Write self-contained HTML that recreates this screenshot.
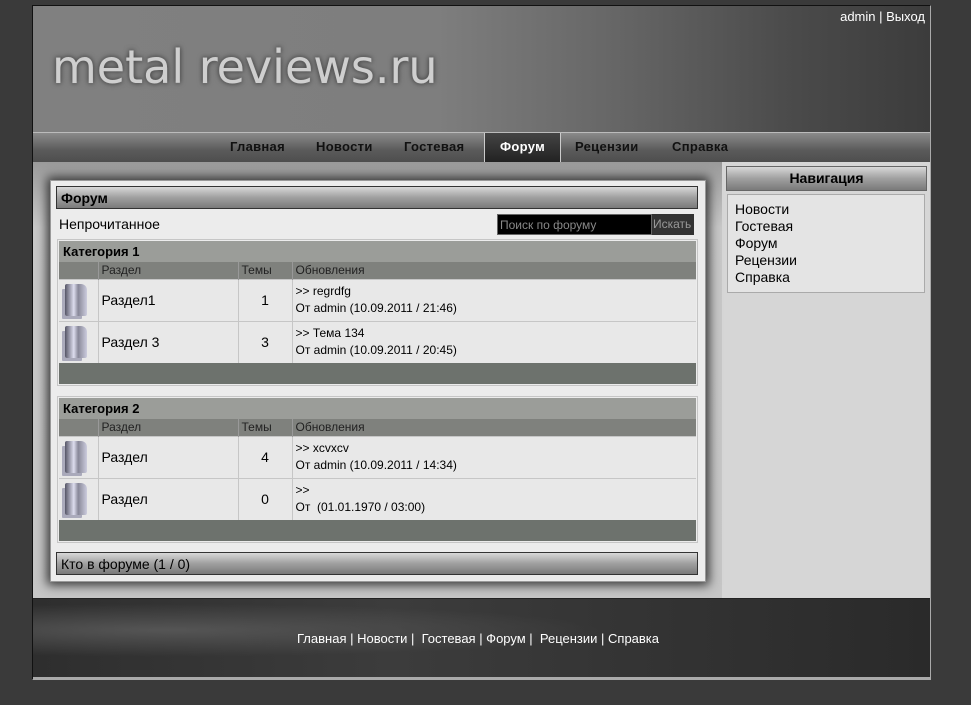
<!DOCTYPE html>
<html><head><meta charset="utf-8"><style>
*{margin:0;padding:0;box-sizing:border-box}
body{width:971px;height:705px;background:#3a3a3a;font-family:"Liberation Sans",sans-serif;position:relative;overflow:hidden}
.a{position:absolute}
#wrap{left:32px;top:5px;width:899px;height:675px;border:1px solid #111;border-right-color:#aaa;border-bottom-color:#aaa;background:#d4d4d4}
#hdr{left:33px;top:6px;width:897px;height:126px;background:linear-gradient(90deg,#808080 0%,#7e7e7e 45%,#666 65%,#4a4a4a 85%,#3c3c3c 100%)}
#logo{left:52px;top:40px;font-family:"DejaVu Sans",sans-serif;font-size:46px;color:#cfcfcf;letter-spacing:0;text-shadow:0 0 6px #444,0 0 3px #555,0 0 1px #ccc}
#user{right:46px;top:9px;color:#fff;font-size:13px}
#nav{left:33px;top:132px;width:897px;height:30px;border-top:1px solid #bbb;background:linear-gradient(#8a8a8a,#5a5a5a 60%,#4e4e4e)}
.ni{top:7px;font-size:13px;font-weight:bold;color:#111;letter-spacing:0.3px}
#act{left:484px;top:133px;width:77px;height:29px;background:linear-gradient(#444,#222);border-left:1px solid #ccc;border-right:1px solid #ccc;color:#fff;font-weight:bold;font-size:13px;text-align:center;padding-top:6px;letter-spacing:0.3px}
#main{left:33px;top:162px;width:689px;height:436px;background:linear-gradient(#9a9a9a,#c8c8c8 15%,#c6c6c6)}
#side{left:722px;top:162px;width:208px;height:436px;background:#d6d6d6}
#box{left:50px;top:180px;width:656px;height:402px;background:#ececec;border:1px solid #999;box-shadow:0 0 10px 3px #333}
.bar{height:23px;border:1px solid #333;background:linear-gradient(#d8d8d8,#a0a0a0 50%,#7a7a7a);font-size:14px;color:#000;padding:3px 4px}
table{border-collapse:collapse;font-size:14px}
.cat{left:57px;width:641px;border:1px solid #c6c6c6;background:#ececec;padding:1px}
.ct{height:21px;background:#9b9d99;font-weight:bold;font-size:13px;padding:2px 4px;border-bottom:0}
.th td{background:#7f817d;height:17px;font-size:12px;color:#222;padding:0 3px;border-left:1px solid #999}
.tr td{height:42px;border-top:1px solid #c6c6c6;border-left:1px solid #c6c6c6;background:#e8e8e8}
.ft{height:21px;background:#6d726d}
.fold{width:22px;height:32px;margin-left:6px;background:linear-gradient(90deg,#556,#dde 40%,#889 60%,#ccd);border-radius:2px 6px 2px 2px;box-shadow:-4px 4px 0 -1px #aab}
.up{font-size:12px;line-height:17px}
#foot{left:33px;top:598px;width:897px;height:81px;background:radial-gradient(ellipse at 15% 40%,#555,transparent 40%),linear-gradient(90deg,#2e2e2e,#3c3c3c 40%,#333 70%,#2a2a2a);border-top:1px solid #222;border-bottom:2px solid #aaa}
</style></head><body>
<div id="wrap" class="a"></div>
<div id="hdr" class="a"></div>
<div id="logo" class="a">metal reviews.ru</div>
<div id="user" class="a">admin | Выход</div>
<div id="nav" class="a"></div>
<div class="a ni" style="left:230px;top:139px">Главная</div>
<div class="a ni" style="left:316px;top:139px">Новости</div>
<div class="a ni" style="left:404px;top:139px">Гостевая</div>
<div id="act" class="a">Форум</div>
<div class="a ni" style="left:575px;top:139px">Рецензии</div>
<div class="a ni" style="left:672px;top:139px">Справка</div>
<div id="main" class="a"></div>
<div id="side" class="a"></div>
<div class="a bar" style="left:726px;top:166px;width:201px;height:25px;text-align:center;font-weight:bold;border-color:#666">Навигация</div>
<div class="a" style="left:727px;top:194px;width:198px;height:99px;border:1px solid #aaa;background:#e4e4e4;padding:6px 7px;font-size:14px;line-height:17px">Новости<br>Гостевая<br>Форум<br>Рецензии<br>Справка</div>
<div id="box" class="a"></div>
<div class="a bar" style="left:56px;top:186px;width:642px;font-weight:bold">Форум</div>
<div class="a" style="left:59px;top:216px;font-size:14px">Непрочитанное</div>
<div class="a" style="left:497px;top:214px;width:155px;height:21px;background:#000;color:#888;font-size:12px;padding:3px 2px;border:1px solid #666">Поиск по форуму</div>
<div class="a" style="left:652px;top:214px;width:42px;height:21px;background:#333;color:#999;font-size:12px;padding:3px 1px">Искать</div>

<div class="a cat" style="top:239px"><table style="width:637px">
<tr><td colspan="4" class="ct">Категория 1</td></tr>
<tr class="th"><td style="width:39px;border-left:0"></td><td style="width:140px">Раздел</td><td style="width:54px">Темы</td><td>Обновления</td></tr>
<tr class="tr"><td style="border-left:0"><div class="fold"></div></td><td style="padding-left:3px">Раздел1</td><td style="text-align:center">1</td><td class="up" style="padding-left:3px">&gt;&gt; regrdfg<br>От admin (10.09.2011 / 21:46)</td></tr>
<tr class="tr"><td style="border-left:0"><div class="fold"></div></td><td style="padding-left:3px">Раздел 3</td><td style="text-align:center">3</td><td class="up" style="padding-left:3px">&gt;&gt; Тема 134<br>От admin (10.09.2011 / 20:45)</td></tr>
<tr><td colspan="4" class="ft"></td></tr></table></div>

<div class="a cat" style="top:396px"><table style="width:637px">
<tr><td colspan="4" class="ct">Категория 2</td></tr>
<tr class="th"><td style="width:39px;border-left:0"></td><td style="width:140px">Раздел</td><td style="width:54px">Темы</td><td>Обновления</td></tr>
<tr class="tr"><td style="border-left:0"><div class="fold"></div></td><td style="padding-left:3px">Раздел</td><td style="text-align:center">4</td><td class="up" style="padding-left:3px">&gt;&gt; xcvxcv<br>От admin (10.09.2011 / 14:34)</td></tr>
<tr class="tr"><td style="border-left:0"><div class="fold"></div></td><td style="padding-left:3px">Раздел</td><td style="text-align:center">0</td><td class="up" style="padding-left:3px">&gt;&gt;<br>От &nbsp;(01.01.1970 / 03:00)</td></tr>
<tr><td colspan="4" class="ft"></td></tr></table></div>

<div class="a bar" style="left:56px;top:552px;width:642px">Кто в форуме (1 / 0)</div>
<div id="foot" class="a"></div>
<div class="a" style="left:297px;top:631px;color:#fff;font-size:13px;white-space:nowrap">Главная | Новости | &nbsp;Гостевая | Форум | &nbsp;Рецензии | Справка</div>
</body></html>
